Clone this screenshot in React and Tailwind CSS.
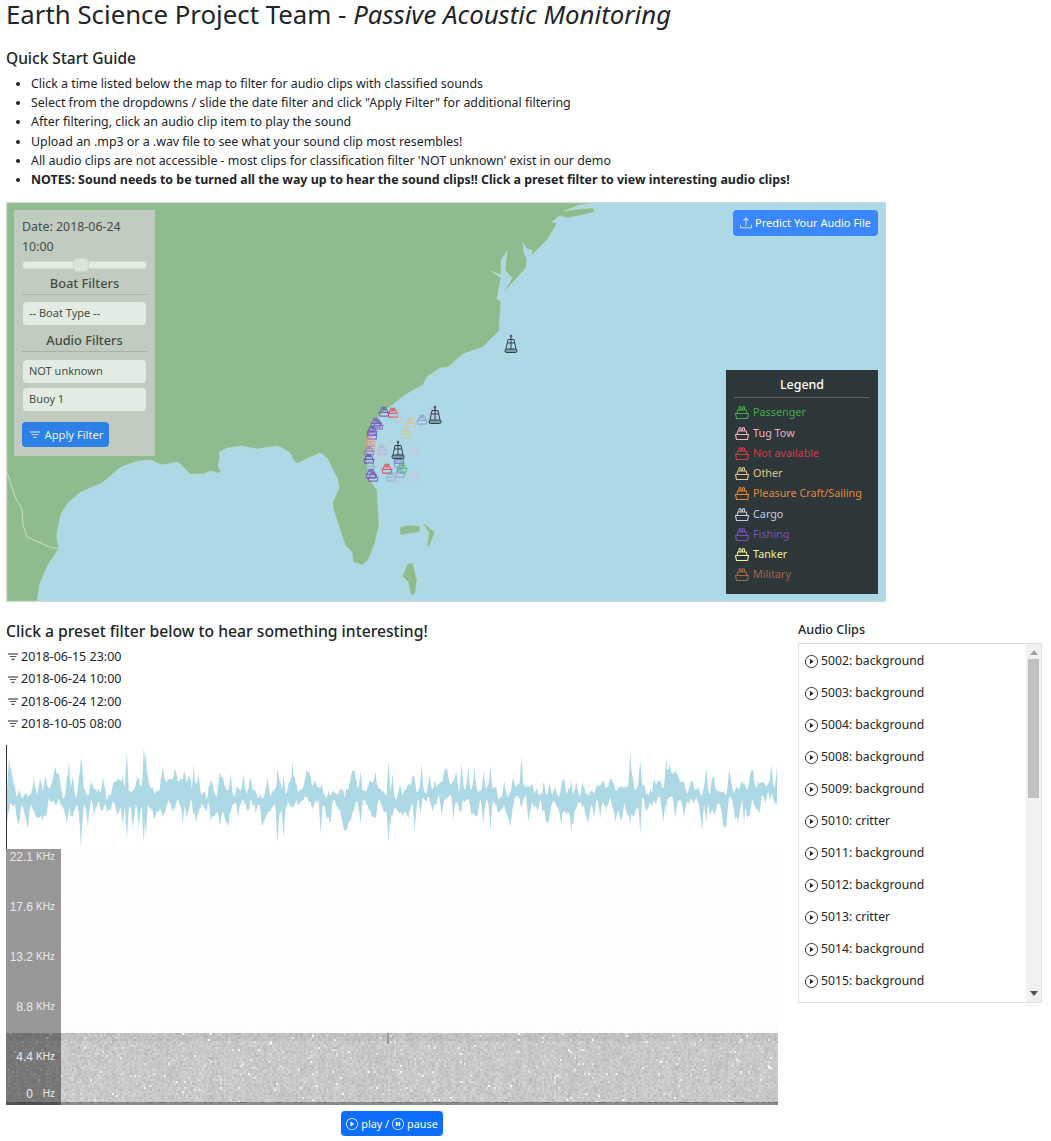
import React from 'react';
import { BsUpload, BsFilter, BsPlayCircle, BsPauseCircle } from 'react-icons/bs';

// small seeded random so the wave and spectrogram stay the same every render
function makeRandom(seed) {
  let s = seed;
  return () => {
    s = (s * 1664525 + 1013904223) % 4294967296;
    return s / 4294967296;
  };
}

// piecewise linear noise, one random knot every `step` px
function makeNoise(rand, length, step) {
  const knots = [];
  for (let i = 0; i <= length / step + 1; i++) knots.push(rand());
  return (x) => {
    const i = Math.floor(x / step);
    const t = x / step - i;
    return knots[i] * (1 - t) + knots[i + 1] * t;
  };
}

// map outlines are written in page pixels, the svg viewBox below lines up with that
const LAND = '597,203 580,205 564,211 578,209 593,208 595,212 568,218 559,216 552,222 557,223 548,239 532,255 532,250 527,249 523,243 524,253 527,259 526,268 503,293 512,278 505,270 507,251 501,260 501,275 491,271 501,278 497,299 501,301 499,331 483,347 463,354 448,367 440,368 427,377 423,385 405,395 390,407 377,418 372,425 368,440 367,457 368,477 377,490 379,525 375,543 368,560 362,565 353,562 352,552 345,545 333,508 333,502 339,488 338,480 327,458 320,453 298,463 295,462 289,452 278,446 257,449 242,446 227,448 219,452 220,457 218,466 221,472 217,473 211,471 203,474 190,474 178,462 162,465 150,460 138,461 121,467 102,483 81,492 68,503 61,514 57,533 57,540 59,548 48,565 40,583 37,601 7,601 7,203';
const ISLANDS = [
  '400,527 408,525 420,526 420,532 400,535',
  '422,522 435,532 429,547 427,545 429,533',
  '408,563 413,563 417,580 415,594 411,595 408,582 402,576',
];
const BORDER = '7,472 15,497 22,509 23,525 27,537 52,548 59,548';

const MARKERS = [
  [384, 411, '#6a5ab5', 0.85], [393, 412, '#e8434f', 0.85], [398, 417, '#d8bfd8', 0.55],
  [411, 422, '#e3bf80', 0.7], [422, 419, '#8a8ed0', 0.7], [434, 412, '#d8a8d8', 0.7],
  [406, 433, '#e3bf80', 0.7], [376, 422, '#6a5ab5', 0.85], [378, 424, '#7e57c2', 0.8],
  [372, 430, '#6a5ab5', 0.85], [372, 434, '#7e57c2', 0.8], [370, 440, '#f08a9c', 0.7],
  [370, 445, '#e3a060', 0.7], [369, 450, '#9a7ab5', 0.85], [369, 458, '#6a3fc0', 0.85],
  [370, 465, '#8fa8b0', 0.7], [382, 449, '#b8a0d8', 0.6], [390, 445, '#d8bfd8', 0.55],
  [380, 454, '#d8bfd8', 0.55], [414, 450, '#d8bfd8', 0.55], [399, 458, '#6a6ac0', 0.7],
  [399, 462, '#8a8ed0', 0.7], [387, 468, '#e8434f', 0.85], [402, 467, '#4caf50', 0.7],
  [400, 472, '#7a9ac8', 0.7], [391, 476, '#8a9ed0', 0.6], [397, 477, '#d8bfd8', 0.55],
  [414, 475, '#d8bfd8', 0.55], [371, 473, '#6a5ab5', 0.85], [373, 476, '#7e57c2', 0.85],
];

const BUOYS = [[511, 344], [435, 415], [398, 450]];

const LEGEND = [
  ['Passenger', 'text-[#46a84e]'],
  ['Tug Tow', 'text-[#eeb0ba]'],
  ['Not available', 'text-[#d2394a]'],
  ['Other', 'text-[#e0c48c]'],
  ['Pleasure Craft/Sailing', 'text-[#e5883a]'],
  ['Cargo', 'text-[#c9c9e2]'],
  ['Fishing', 'text-[#7254b8]'],
  ['Tanker', 'text-[#eef09a]'],
  ['Military', 'text-[#a0674b]'],
];

const NOTES = [
  'Click a time listed below the map to filter for audio clips with classified sounds',
  'Select from the dropdowns / slide the date filter and click "Apply Filter" for additional filtering',
  'After filtering, click an audio clip item to play the sound',
  'Upload an .mp3 or a .wav file to see what your sound clip most resembles!',
  "All audio clips are not accessible - most clips for classification filter 'NOT unknown' exist in our demo",
];

const PRESETS = ['2018-06-15 23:00', '2018-06-24 10:00', '2018-06-24 12:00', '2018-10-05 08:00'];

const CLIPS = [
  '5002: background', '5003: background', '5004: background', '5008: background',
  '5009: background', '5010: critter', '5011: background', '5012: background',
  '5013: critter', '5014: background', '5015: background',
];

const FREQS = [
  ['22.1', 'KHz', 'top-[1px]'], ['17.6', 'KHz', 'top-[51px]'], ['13.2', 'KHz', 'top-[101px]'],
  ['8.8', 'KHz', 'top-[151px]'], ['4.4', 'KHz', 'top-[201px]'], ['0', 'Hz', 'top-[238px]'],
];

function BoatPaths() {
  return (
    <>
      <path d="M1.5 8.5h13l-1 5h-11z" />
      <path d="M3 8.5l.8-3.5h8.4l.8 3.5" />
      <path d="M5 5V2.5a1 1 0 0 1 2 0V5M8.5 5V2.5a1 1 0 0 1 2 0V5" />
    </>
  );
}

function BoatIcon() {
  return (
    <svg viewBox="0 0 16 14" className="w-[16px] h-[14px] shrink-0" fill="none" stroke="currentColor" strokeWidth="1.1">
      <BoatPaths />
    </svg>
  );
}

function Buoy({ x, y }) {
  return (
    <g transform={`translate(${x} ${y})`} fill="none" stroke="#26343c" strokeWidth="0.9">
      <circle cx="0" cy="-8" r="0.9" />
      <path d="M0 -7V5M-3 -4.5H3M-3 -4.5L-5 5M3 -4.5L5 5M-3.5 -1H3.5" />
      <rect x="-6" y="5" width="12" height="3.5" rx="1.5" fill="#7f9aa6" />
    </g>
  );
}

function MapView() {
  return (
    <svg viewBox="7 203 878 398" className="absolute inset-0 w-full h-full">
      <rect x="7" y="203" width="878" height="398" fill="#add8e6" />
      <polygon points={LAND} fill="#8fbc8f" stroke="#c4dcc8" strokeWidth="0.5" />
      {ISLANDS.map((p) => (
        <polygon key={p} points={p} fill="#8fbc8f" stroke="#c4dcc8" strokeWidth="0.5" />
      ))}
      <polyline points={BORDER} fill="none" stroke="#cfdccb" strokeWidth="1" />
      {MARKERS.map(([x, y, c, o], i) => (
        <g key={i} transform={`translate(${x - 6} ${y - 5}) scale(0.75)`} fill="none" stroke={c} strokeWidth="1.4" opacity={o}>
          <BoatPaths />
        </g>
      ))}
      {BUOYS.map(([x, y]) => <Buoy key={x} x={x} y={y} />)}
    </svg>
  );
}

function FilterPanel() {
  return (
    <div className="absolute left-[7px] top-[7px] w-[141px] h-[246px] bg-[#c1cbc0] px-2 pt-[7px] text-[#454d48] text-[12.4px] leading-[20px] flex flex-col">
      <div>Date: 2018-06-24<br />10:00</div>
      <div className="relative mt-[4px] h-[8px] bg-[#e4ebe2] rounded-sm border border-[#d2dad0]">
        <div className="absolute left-[50px] -top-[4px] w-[16px] h-[14px] bg-[#dbe4da] border border-[#cdd6cc] rounded-sm" />
      </div>
      <div className="mt-[4px] pb-[1px] text-center text-[12.8px] font-medium border-b border-[#a9b3a8]">Boat Filters</div>
      <div className="mt-[7px] mx-[1px] h-[23px] bg-[#e2ece2] rounded-sm pl-[6px] text-[11px] leading-[22px]">-- Boat Type --</div>
      <div className="mt-[5px] pb-[1px] text-center text-[12.8px] font-medium border-b border-[#a9b3a8]">Audio Filters</div>
      <div className="mt-[8px] mx-[1px] h-[23px] bg-[#e2ece2] rounded-sm pl-[6px] text-[11px] leading-[22px]">NOT unknown</div>
      <div className="mt-[5px] mx-[1px] h-[23px] bg-[#e2ece2] rounded-sm pl-[6px] text-[11px] leading-[22px]">Buoy 1</div>
      <div className="mt-[11px] w-[87px] h-[25px] bg-[#2d80e6] rounded-sm text-[#e8f0fa] text-[11.2px] flex items-center justify-center gap-[3px]">
        <BsFilter size={14} />
        Apply Filter
      </div>
    </div>
  );
}

function Legend() {
  return (
    <div className="absolute right-[7px] top-[167px] w-[152px] h-[224px] bg-[#2d3639] px-2 pt-[5px] text-[10.8px]">
      <div className="text-center text-white font-medium text-[12.4px] leading-[20px] pb-[2px] border-b border-[#5a6265]">Legend</div>
      <div className="mt-[4px] flex flex-col">
        {LEGEND.map(([name, color]) => (
          <div key={name} className={`h-[20.25px] flex items-center gap-[3px] ${color}`}>
            <BoatIcon />
            {name}
          </div>
        ))}
      </div>
    </div>
  );
}

function Waveform() {
  const rand = makeRandom(41);
  const noiseUp = makeNoise(rand, 772, 3);
  const noiseDown = makeNoise(rand, 772, 3);
  const fine = makeNoise(rand, 772, 2);
  const drift = makeNoise(rand, 772, 26);
  const spikes = [
    [74, 46, 45], [75, 38, 30], [120, 43, 45], [116, 20, 30], [137, 48, 48], [139, 40, 44], [62, 33, 10],
    [187, 37, 15], [176, 15, 28], [224, 27, 12], [271, 35, 42], [277, 25, 38], [286, 33, 15], [314, 10, 35],
    [382, 37, 45], [386, 30, 12], [415, 30, 12], [2, 36, 18], [340, 18, 24], [455, 30, 20], [484, 30, 34],
    [515, 38, 14], [565, 22, 30], [624, 46, 30], [634, 38, 36], [660, 34, 18], [700, 26, 30], [738, 14, 28],
  ];
  const top = [];
  const bottom = [];
  for (let x = 0; x <= 771; x++) {
    const center = 52 + (drift(x) - 0.5) * 12 + (fine(x) - 0.5) * 10;
    let up = 2 + 24 * noiseUp(x) * noiseUp(x) + 3 * rand();
    let down = 2 + 26 * noiseDown(x) * noiseDown(x) + 3 * rand();
    for (const [sx, su, sd] of spikes) {
      const d = Math.abs(x - sx);
      if (d < 2.5) {
        const k = 1 - d / 2.5;
        up = Math.max(up, su * k);
        down = Math.max(down, sd * k);
      }
    }
    top.push(`${x},${Math.max(1, center - up).toFixed(1)}`);
    bottom.unshift(`${x},${Math.min(103, center + down).toFixed(1)}`);
  }
  return (
    <svg viewBox="0 0 772 104" className="block w-[772px] h-[104px] border-l border-[#333]">
      <polygon points={[...top, ...bottom].join(' ')} fill="#add8e6" />
    </svg>
  );
}

function Spectrogram() {
  const rand = makeRandom(7);
  const greys = ['#b6b6b6', '#bdbdbd', '#c4c4c4', '#cacaca', '#d0d0d0', '#d8d8d8', '#e4e4e4', '#f2f2f2'];
  const paths = greys.map(() => []);
  for (let x = 0; x < 772; x += 2) {
    const column = rand() * 0.8;
    for (let y = 184; y < 253; y += 2) {
      let n = (rand() + rand() + rand()) * 1.9 + column - (y < 191 ? 1.2 : 0);
      if (rand() < 0.018) n = 6 + rand() * 2;
      const level = Math.max(0, Math.min(7, Math.floor(n)));
      paths[level].push(`M${x} ${y}h2v2h-2z`);
    }
  }
  const specks = [];
  for (let i = 0; i < 160; i++) {
    specks.push(`M${Math.floor(rand() * 772)} ${178 + Math.floor(rand() * 6)}h1v1h-1z`);
  }
  const dark = [];
  for (let x = 0; x < 772; x += 3) {
    if (rand() < 0.4) dark.push(`M${x} 253h3v1h-3z`);
  }
  return (
    <div className="relative w-[772px] h-[256px] bg-[#fdfdfd]">
      <svg viewBox="0 0 772 256" className="absolute inset-0 w-full h-full">
        <path d={specks.join('')} fill="#f2f2f2" />
        {paths.map((p, i) => <path key={greys[i]} d={p.join('')} fill={greys[i]} />)}
        <rect x="0" y="253" width="772" height="3" fill="#8c8c8c" />
        <path d={dark.join('')} fill="#6f6f6f" />
        <rect x="381" y="184" width="2" height="11" fill="#999" />
      </svg>
      <div className="absolute left-0 top-0 bottom-0 w-[55px] bg-black/40 text-[#e8e8e8] font-['Liberation_Sans',sans-serif]">
        {FREQS.map(([value, unit, offset]) => (
          <div key={value} className={`absolute left-0 w-full h-[14px] leading-[14px] ${offset}`}>
            <span className="absolute right-[28px] text-[12px]">{value}</span>
            <span className="absolute right-[6px] text-[10px]">{unit}</span>
          </div>
        ))}
      </div>
    </div>
  );
}

function ClipList() {
  return (
    <div className="w-[244px] h-[360px] mt-[3px] border border-[#dfdfdf] flex overflow-hidden">
      <div className="flex-1 flex flex-col pl-[6px] pt-[1px]">
        {CLIPS.map((clip) => (
          <div key={clip} className="h-[32px] shrink-0 flex items-center gap-[3px] text-[12.2px] text-[#212529]">
            <BsPlayCircle size={13} />
            {clip}
          </div>
        ))}
      </div>
      <div className="w-[15px] bg-[#f1f1f1] flex flex-col items-center">
        <svg viewBox="0 0 10 6" className="w-[8px] h-[5px] mt-[6px] mb-[4px]"><path d="M5 0l5 6H0z" fill="#a3a3a3" /></svg>
        <div className="w-[11px] h-[139px] bg-[#c1c1c1]" />
        <svg viewBox="0 0 10 6" className="w-[8px] h-[5px] mt-auto mb-[6px]"><path d="M5 6L0 0h10z" fill="#505050" /></svg>
      </div>
    </div>
  );
}

export default function App() {
  return (
    <div className="w-[1051px] h-[1141px] overflow-hidden pl-[6px] font-['Noto_Sans',sans-serif] text-[#212529]">
      <h1 className="text-[25.8px] leading-[28px] font-normal">
        Earth Science Project Team - <em>Passive Acoustic Monitoring</em>
      </h1>
      <h2 className="mt-[21px] text-[15.5px] leading-[19px] font-medium">Quick Start Guide</h2>
      <ul className="mt-[6px] pl-[25px] list-disc text-[12.4px] leading-[19.2px]">
        {NOTES.map((n) => <li key={n}>{n}</li>)}
        <li className="font-bold">NOTES: Sound needs to be turned all the way up to hear the sound clips!! Click a preset filter to view interesting audio clips!</li>
      </ul>

      <div className="relative mt-[13px] w-[880px] h-[400px] border border-[#d5d5d5] overflow-hidden">
        <MapView />
        <FilterPanel />
        <div className="absolute right-[7px] top-[7px] w-[145px] h-[26px] bg-[#3a86ff] rounded-sm text-white text-[11px] flex items-center justify-center gap-[3px]">
          <BsUpload size={12} />
          Predict Your Audio File
        </div>
        <Legend />
      </div>

      <div className="flex mt-[19px]">
        <div className="w-[792px] shrink-0">
          <h2 className="text-[15.7px] leading-[21px] font-medium">Click a preset filter below to hear something interesting!</h2>
          <div className="mt-[4px] flex flex-col">
            {PRESETS.map((p) => (
              <div key={p} className="h-[22.3px] flex items-center gap-[1px] text-[12.5px]">
                <BsFilter size={14} />
                {p}
              </div>
            ))}
          </div>
          <div className="mt-[10px]">
            <Waveform />
            <Spectrogram />
          </div>
          <div className="w-[772px] flex justify-center mt-[6px]">
            <div className="w-[102px] h-[25px] bg-[#0d6efd] rounded-sm text-white text-[10.8px] flex items-center justify-center gap-[3px]">
              <BsPlayCircle size={12} />
              play /
              <BsPauseCircle size={12} />
              pause
            </div>
          </div>
        </div>
        <div className="-mt-[1px]">
          <div className="text-[12.6px] leading-[20px] font-medium">Audio Clips</div>
          <ClipList />
        </div>
      </div>
    </div>
  );
}
